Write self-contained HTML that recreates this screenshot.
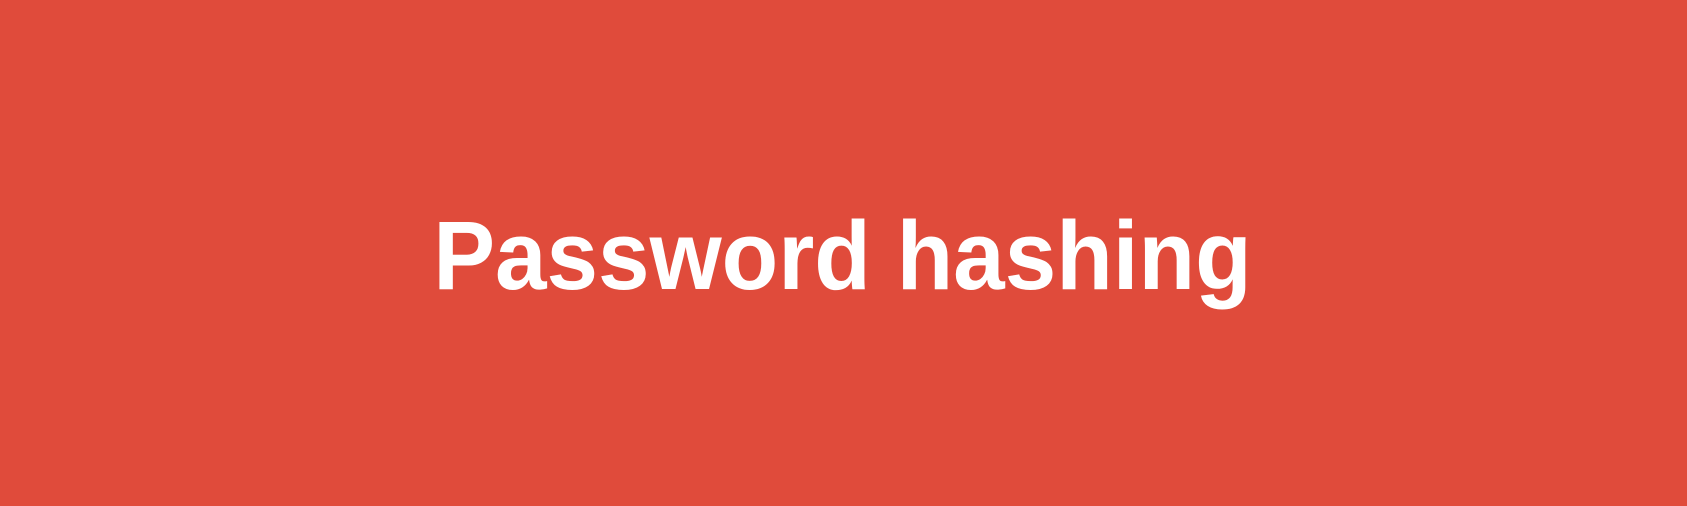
<!DOCTYPE html>
<html>
<head>
<meta charset="utf-8">
<style>
html,body{margin:0;padding:0;}
body{width:1687px;height:506px;background:#E04B3B;position:relative;overflow:hidden;}
.t{position:absolute;left:-1px;width:1687px;top:207px;text-align:center;
font-family:"Liberation Sans",sans-serif;font-weight:bold;font-size:97px;line-height:97px;color:#fff;
transform:scaleX(0.955);transform-origin:843px 0;}
</style>
</head>
<body>
<div class="t">Password hashing</div>
</body>
</html>
